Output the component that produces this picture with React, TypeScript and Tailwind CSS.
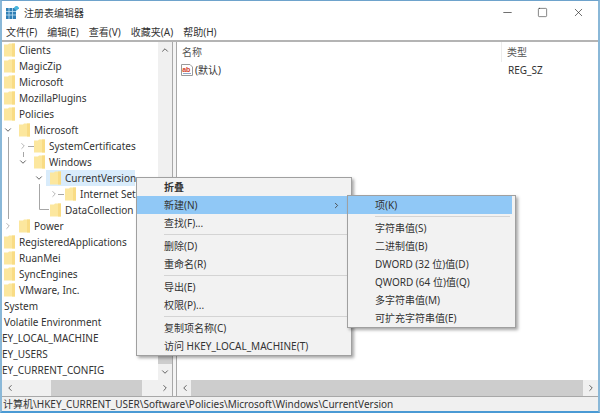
import React from "react";
import { ChevronDown, ChevronLeft, ChevronRight, ChevronUp, Minus, Square, X } from "lucide-react";

const treeRows = [
  { label: "Clients", level: 0, icon: true },
  { label: "MagicZip", level: 0, icon: true },
  { label: "Microsoft", level: 0, icon: true },
  { label: "MozillaPlugins", level: 0, icon: true },
  { label: "Policies", level: 0, icon: true },
  { label: "Microsoft", level: 1, icon: true, arrow: "open" },
  { label: "SystemCertificates", level: 2, icon: true, arrow: "closed" },
  { label: "Windows", level: 2, icon: true, arrow: "open" },
  { label: "CurrentVersion", level: 3, icon: true, arrow: "open", selected: true },
  { label: "Internet Settings", level: 4, icon: true, arrow: "closed" },
  { label: "DataCollection", level: 3, icon: true, arrow: "none" },
  { label: "Power", level: 1, icon: true, arrow: "closed" },
  { label: "RegisteredApplications", level: 0, icon: true },
  { label: "RuanMei", level: 0, icon: true },
  { label: "SyncEngines", level: 0, icon: true },
  { label: "VMware, Inc.", level: 0, icon: true },
  { label: "System", level: 0 },
  { label: "Volatile Environment", level: 0 },
  { label: "EY_LOCAL_MACHINE", level: -1 },
  { label: "EY_USERS", level: -1 },
  { label: "EY_CURRENT_CONFIG", level: -1 },
];

const levelPadding: Record<number, string> = {
  [-1]: "pl-0",
  0: "pl-[2px]",
  1: "pl-[1px]",
  2: "pl-[16px]",
  3: "pl-[32px]",
  4: "pl-[47px]",
};

function FolderIcon() {
  return (
    <svg width="11" height="14" viewBox="0 0 11 14" className="shrink-0">
      <path d="M0 1.5 H4 L5 0.5 H11 V13.5 H0 Z" fill="#fce79e" />
      <path d="M8 0.5 H11 V13.5 H8 Z" fill="#f9dc85" />
    </svg>
  );
}

function RegistryIcon() {
  return (
    <svg width="13" height="13" viewBox="0 0 13 13">
      <rect x="0" y="2" width="10" height="11" fill="#2f7fb5" />
      <path d="M3 2V13M6.5 2V13M0 5.5H10M0 9H10" stroke="#bfe0f2" strokeWidth="0.8" />
      <rect x="8.5" y="0" width="4" height="4" fill="#49b5dc" transform="rotate(45 10.5 2)" />
    </svg>
  );
}

function StringValueIcon() {
  return (
    <svg width="12" height="12" viewBox="0 0 12 12">
      <path d="M0.5 0.5H9L11.5 3V11.5H0.5Z" fill="#fff" stroke="#9a9a9a" />
      <text x="1.2" y="7.5" fontSize="7" fontWeight="700" fill="#d2402a" fontFamily="'Liberation Sans', sans-serif">ab</text>
      <path d="M2 9.5H10" stroke="#8fa8c8" />
    </svg>
  );
}

function TreeRow({ row }: { row: (typeof treeRows)[number] }) {
  return (
    <div className={`flex h-4 items-center whitespace-nowrap ${levelPadding[row.level]}`}>
      {row.arrow && (
        <span className="flex w-[16px] shrink-0 justify-start">
          {row.arrow === "open" && <ChevronDown size={10} strokeWidth={2} className="text-[#444]" />}
          {row.arrow === "closed" && <ChevronRight size={10} strokeWidth={2} className="text-[#a6a6a6]" />}
        </span>
      )}
      <span className={row.selected ? "-ml-1 flex h-4 w-[89px] shrink-0 items-center bg-[#d9ecfb] pl-1" : "flex h-4 items-center"}>
        {row.icon && <FolderIcon />}
        <span className={row.icon ? "ml-[4px]" : ""}>{row.label}</span>
      </span>
    </div>
  );
}

function ScrollBarH({ className, thumb }: { className: string; thumb: string }) {
  return (
    <div className={`flex h-4 items-center bg-[#f0f0f0] ${className}`}>
      <ChevronLeft size={10} strokeWidth={2.2} className="ml-[3px] shrink-0 text-[#555]" />
      <div className={thumb} />
      <div className="flex-1" />
      <ChevronRight size={10} strokeWidth={2.2} className="mr-[2px] shrink-0 text-[#555]" />
    </div>
  );
}

function MenuItem({ label, active, bold, arrow }: { label: string; active?: boolean; bold?: boolean; arrow?: boolean }) {
  return (
    <div className={`flex h-[18px] items-center pl-[27px] pr-2 ${active ? "bg-[#90c8f6]" : ""} ${bold ? "font-bold" : ""}`}>
      <span className="flex-1">{label}</span>
      {arrow && <ChevronRight size={9} strokeWidth={2.4} className="mr-[2px] text-[#444]" />}
    </div>
  );
}

function MenuSep() {
  return (
    <div className="flex h-[5px] items-center pl-[27px] pr-[2px]">
      <div className="h-px flex-1 bg-[#d4d4d4]" />
    </div>
  );
}

export default function App() {
  return (
    <div className="relative flex h-[413px] w-[600px] flex-col overflow-hidden border-x-2 border-t border-b-2 border-x-[#8ab8d8] border-t-[#6ea3cc] border-b-[#4a9ad4] bg-white font-['Noto_Sans','Noto_Sans_CJK_SC',sans-serif] text-[10px] leading-none text-[#333]">
      <div className="flex h-[23px] shrink-0 items-center pl-[4px]">
        <RegistryIcon />
        <span className="ml-[5px] flex-1">注册表编辑器</span>
        <Minus size={13} strokeWidth={1.2} className="mr-[23px] text-[#222]" />
        <Square size={11} strokeWidth={1.2} className="mr-[24px] text-[#222]" />
        <X size={13} strokeWidth={1.2} className="mr-[13px] text-[#222]" />
      </div>

      <div className="flex h-[16px] shrink-0 items-center gap-[10px] pl-[4px]">
        <span>文件(F)</span>
        <span>编辑(E)</span>
        <span>查看(V)</span>
        <span>收藏夹(A)</span>
        <span>帮助(H)</span>
      </div>

      <div className="flex min-h-0 flex-1 border-t-2 border-[#b4b4b4]">
        <div className="flex w-[171px] shrink-0 flex-col border-r border-[#a8a8a8]">
          <div className="relative flex min-h-0 flex-1">
            <div className="min-w-0 flex-1 overflow-hidden">
              {treeRows.map((row, i) => (
                <TreeRow key={i} row={row} />
              ))}
            </div>
            {/* connector lines of the tree */}
            <svg width="157" height="338" className="pointer-events-none absolute left-0 top-0" fill="none" stroke="#a6a6a6">
              <path d="M6.5 95V177M21.5 110V115M37.5 142V167.5H47M26 104.5H32M56 152.5H62" />
            </svg>
            <div className="flex w-[14px] shrink-0 flex-col items-center bg-[#f0f0f0]">
              <ChevronUp size={10} strokeWidth={2.2} className="mt-[3px] text-[#555]" />
              <div className="mt-auto h-[66px] w-full bg-[#cdcdcd]" />
              <ChevronDown size={10} strokeWidth={2.2} className="my-[3px] text-[#555]" />
            </div>
          </div>
          <ScrollBarH className="shrink-0" thumb="ml-[36px] h-full w-[91px] bg-[#cdcdcd]" />
        </div>

        <div className="w-[3px] shrink-0 bg-[#f4f4f4]" />

        <div className="flex min-w-0 flex-1 flex-col border-l border-[#a8a8a8]">
          <div className="min-h-0 flex-1">
            <div className="flex h-[20px] items-center">
              <div className="flex h-full w-[325px] items-center border-r border-[#ececec] pl-[5px] text-[#555]">名称</div>
              <div className="pl-[5px] text-[#555]">类型</div>
            </div>
            <div className="flex h-[16px] items-center">
              <div className="flex w-[325px] items-center gap-[2px] pl-[4px]">
                <StringValueIcon />
                <span>(默认)</span>
              </div>
              <div className="pl-[6px]">REG_SZ</div>
            </div>
          </div>
          <ScrollBarH className="shrink-0" thumb="ml-[1px] h-full w-[392px] bg-[#cdcdcd]" />
        </div>
      </div>

      <div className="flex h-[15px] shrink-0 items-center overflow-hidden whitespace-nowrap border-t border-[#a8a8a8] bg-[#f0f0f0] pl-[1px]">
        计算机\HKEY_CURRENT_USER\Software\Policies\Microsoft\Windows\CurrentVersion
      </div>

      {/* context menu */}
      <div className="absolute left-[134px] top-[176px] h-[179px] w-[216px] border border-[#a0a0a0] bg-[#f2f2f2] shadow-[2px_2px_3px_rgba(0,0,0,0.35)]">
        <MenuItem label="折叠" bold />
        <MenuItem label="新建(N)" active arrow />
        <MenuItem label="查找(F)..." />
        <MenuSep />
        <MenuItem label="删除(D)" />
        <MenuItem label="重命名(R)" />
        <MenuSep />
        <MenuItem label="导出(E)" />
        <MenuItem label="权限(P)..." />
        <MenuSep />
        <MenuItem label="复制项名称(C)" />
        <MenuItem label="访问 HKEY_LOCAL_MACHINE(T)" />
      </div>

      {/* submenu */}
      <div className="absolute left-[345px] top-[194px] h-[133px] w-[169px] border border-[#a0a0a0] bg-[#f2f2f2] pr-[3px] shadow-[2px_2px_3px_rgba(0,0,0,0.35)]">
        <MenuItem label="项(K)" active />
        <MenuSep />
        <MenuItem label="字符串值(S)" />
        <MenuItem label="二进制值(B)" />
        <MenuItem label="DWORD (32 位)值(D)" />
        <MenuItem label="QWORD (64 位)值(Q)" />
        <MenuItem label="多字符串值(M)" />
        <MenuItem label="可扩充字符串值(E)" />
      </div>
    </div>
  );
}
